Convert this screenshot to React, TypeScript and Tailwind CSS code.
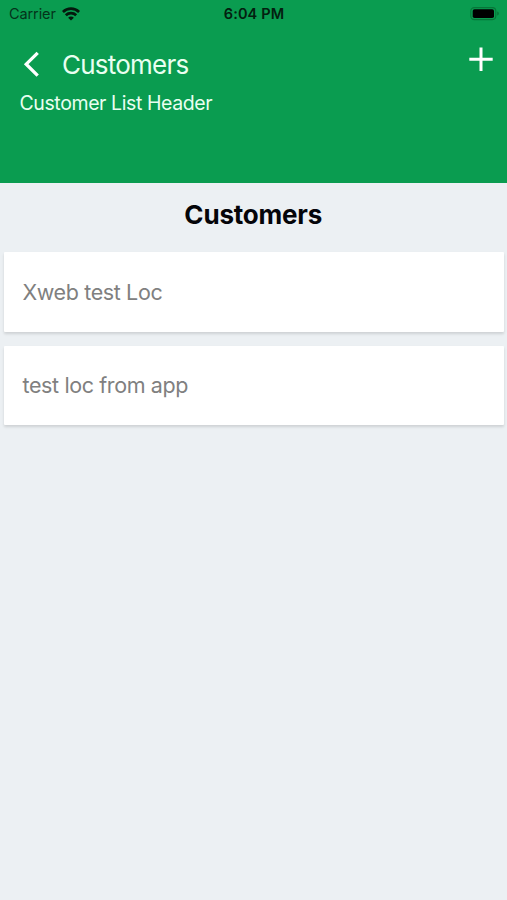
import React from "react";

const customers = ["Xweb test Loc", "test loc from app"];

function WifiIcon() {
  return (
    <svg width="18" height="14" viewBox="0 0 18 14" fill="none" stroke="#04190d" strokeWidth="2.7">
      <path d="M0.9 5C5.4 0.5 12.6 0.5 17.1 5" />
      <path d="M3.8 8.3C6.7 5.5 11.3 5.5 14.2 8.3" />
      <path d="M9 13.6L6.1 10.7C7.7 9.2 10.3 9.2 11.9 10.7Z" fill="#04190d" stroke="none" />
    </svg>
  );
}

function BatteryIcon() {
  return (
    <svg width="30" height="14" viewBox="0 0 30 14">
      <rect x="0.8" y="0.6" width="25" height="12" rx="3.5" fill="none" stroke="#077638" strokeWidth="1.1" />
      <rect x="2.7" y="2.2" width="21.3" height="8.8" rx="1.8" fill="#000" />
      <path d="M27.2 4.6C29.4 5.3 29.4 7.9 27.2 8.6Z" fill="#077638" />
    </svg>
  );
}

function StatusBar() {
  return (
    <div className="grid h-[27px] grid-cols-3 items-center pl-[9px] pr-[7px]">
      <div className="flex items-center gap-[6px]">
        <span className="pt-[2px] text-[14.5px] leading-none tracking-[-0.1px] text-[#04331a]">Carrier</span>
        <WifiIcon />
      </div>
      <span className="pt-[2px] pr-px text-center text-[14.5px] font-semibold leading-none tracking-[0.15px] text-[#03200f]">6:04 PM</span>
      <div className="flex justify-end"><BatteryIcon /></div>
    </div>
  );
}

export default function App() {
  return (
    <div className="h-[900px] w-[507px] overflow-hidden bg-[#ecf0f3] font-['Inter','Liberation_Sans',sans-serif]">
      <header className="h-[182.5px] bg-[#0a9c50] text-[#e9fff0]">
        <StatusBar />
        <div className="flex h-[62px] items-start pl-[23px] pr-[14.5px] pt-[20px]">
          <svg className="mt-[4px]" width="17" height="27" viewBox="0 0 17 27" fill="none" stroke="#fff" strokeWidth="3.3">
            <path d="M14.7 1.8L3.2 13.2L14.7 24.7" />
          </svg>
          <h1 className="ml-[22px] text-[26px] leading-[36px] tracking-[-0.78px]">Customers</h1>
          <svg className="ml-auto" width="24" height="24" viewBox="0 0 24 24" stroke="#fff" strokeWidth="3">
            <path d="M0.3 12.3H23.7M12 0.5V24" />
          </svg>
        </div>
        <p className="pl-[19.5px] text-[19.5px] leading-[28px] tracking-[-0.4px]">Customer List Header</p>
      </header>
      <main className="pl-[4px] pr-[3px]">
        <h2 className="h-[69.5px] pr-[1.5px] pt-[14px] text-center text-[26px] font-bold leading-[36px] tracking-[-0.2px] text-[#050509]">Customers</h2>
        <div className="flex flex-col gap-[14px]">
          {customers.map((name) => (
            <div key={name} className="flex h-[79.5px] items-center rounded-[1px] bg-white pl-[18.5px] text-[21.5px] tracking-[-0.38px] text-[#808080] shadow-[0_2px_3px_rgba(0,0,0,0.13)]">
              {name}
            </div>
          ))}
        </div>
      </main>
    </div>
  );
}
